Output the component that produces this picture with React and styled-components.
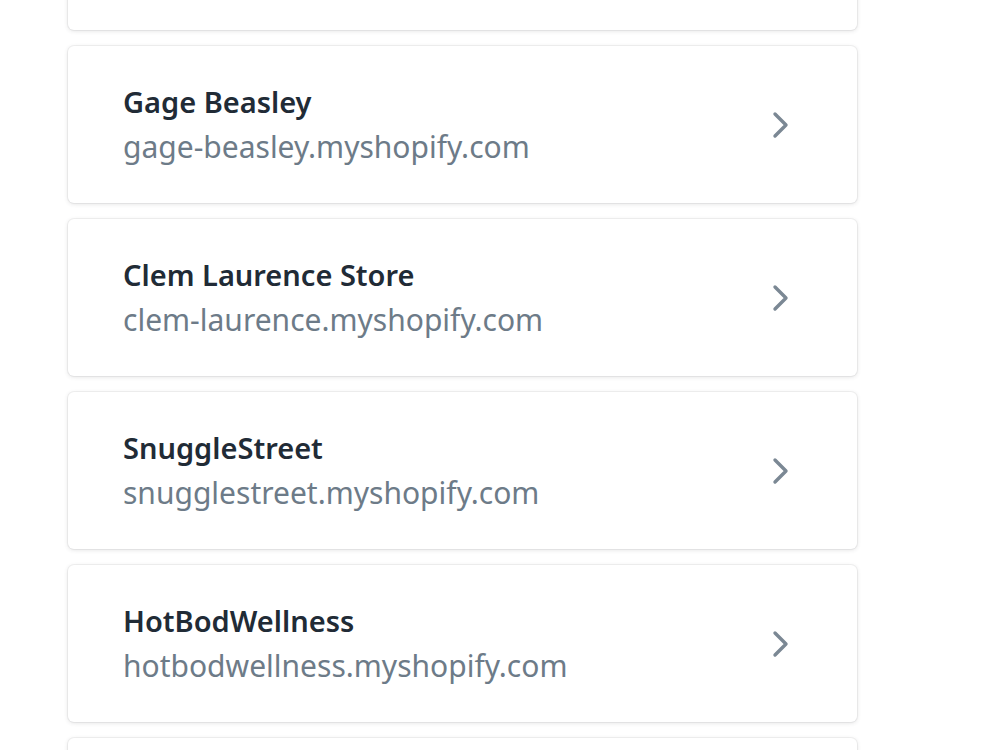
import styled, { createGlobalStyle } from 'styled-components';

const GlobalStyle = createGlobalStyle`
  html, body {
    margin: 0;
    padding: 0;
    background: #ffffff;
    overflow: hidden;
  }
  body {
    font-family: 'Noto Sans', 'Open Sans', sans-serif;
  }
`;

const Page = styled.div`
  width: 1000px;
  height: 750px;
  overflow: hidden;
  background: #fff;
`;

// list is scrolled a little, so the top card only peeks in
const StoreList = styled.ul`
  list-style: none;
  margin: -127px 0 0 68px;
  padding: 0;
  width: 789px;
  display: flex;
  flex-direction: column;
  gap: 16px;
`;

const StoreCard = styled.li`
  height: 157px;
  box-sizing: border-box;
  background: #fff;
  border-radius: 6px;
  box-shadow: 0 0 0 1px rgba(63, 63, 68, 0.06), 0 1px 4px rgba(63, 63, 68, 0.16);
  display: flex;
  align-items: center;
  justify-content: space-between;
  padding: 0 66px 0 55px;
  cursor: pointer;
`;

const StoreInfo = styled.div`
  display: flex;
  flex-direction: column;
`;

const StoreName = styled.span`
  font-size: 29px;
  line-height: 45px;
  font-weight: 600;
  color: #212b36;
`;

const StoreDomain = styled.span`
  font-size: 30px;
  line-height: 46px;
  color: #6d7b88;
`;

const Chevron = styled.svg`
  width: 20px;
  height: 28px;
  flex-shrink: 0;
  color: #7b8894;
`;

const stores = [
  { name: 'Gage Beasley', domain: 'gage-beasley.myshopify.com' },
  { name: 'Clem Laurence Store', domain: 'clem-laurence.myshopify.com' },
  { name: 'SnuggleStreet', domain: 'snugglestreet.myshopify.com' },
  { name: 'HotBodWellness', domain: 'hotbodwellness.myshopify.com' },
];

const ChevronRight = () => (
  <Chevron viewBox="0 0 20 28" fill="none">
    <path d="M4 3l11 11-11 11" stroke="currentColor" strokeWidth="3.4" strokeLinecap="round" strokeLinejoin="round" />
  </Chevron>
);

export default function App() {
  return (
    <Page>
      <GlobalStyle />
      <StoreList>
        <StoreCard />
        {stores.map((store) => (
          <StoreCard key={store.domain}>
            <StoreInfo>
              <StoreName>{store.name}</StoreName>
              <StoreDomain>{store.domain}</StoreDomain>
            </StoreInfo>
            <ChevronRight />
          </StoreCard>
        ))}
        <StoreCard />
      </StoreList>
    </Page>
  );
}
